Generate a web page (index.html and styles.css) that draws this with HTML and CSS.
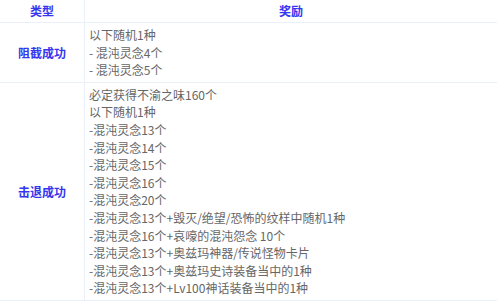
FILE: index.html
```html
<!DOCTYPE html>
<html lang="zh">
<head>
<meta charset="utf-8">
<link rel="stylesheet" href="styles.css">
</head>
<body>
<table class="reward-table">
  <thead>
    <tr>
      <th class="col-type">类型</th>
      <th class="col-reward">奖励</th>
    </tr>
  </thead>
  <tbody>
    <tr>
      <td class="label">阻截成功</td>
      <td class="items">以下随机1种<br>- 混沌灵念4个<br>- 混沌灵念5个</td>
    </tr>
    <tr>
      <td class="label">击退成功</td>
      <td class="items">必定获得不渝之味160个<br>以下随机1种<br>-混沌灵念13个<br>-混沌灵念14个<br>-混沌灵念15个<br>-混沌灵念16个<br>-混沌灵念20个<br>-混沌灵念13个+毁灭/绝望/恐怖的纹样中随机1种<br>-混沌灵念16个+哀嚎的混沌怨念 10个<br>-混沌灵念13个+奥兹玛神器/传说怪物卡片<br>-混沌灵念13个+奥兹玛史诗装备当中的1种<br>-混沌灵念13个+Lv100神话装备当中的1种</td>
    </tr>
  </tbody>
</table>
</body>
</html>
```

FILE: styles.css
```css
html, body {
  margin: 0;
  padding: 0;
  background: #ffffff;
}

.reward-table {
  width: 497px;
  border-collapse: collapse;
  table-layout: fixed;
  font-family: "Noto Sans CJK SC", "Microsoft YaHei", sans-serif;
  font-size: 12px;
  line-height: 17.6px;
  color: #666666;
}

.reward-table th,
.reward-table td {
  border-bottom: 1px solid #e9f0f8;
  padding: 0;
}

.col-type {
  width: 84px;
  border-right: 1px solid #e9f0f8;
}

.reward-table th {
  height: 22px;
  font-weight: bold;
  color: #3535f0;
  text-align: center;
  vertical-align: middle;
}

.label {
  border-right: 1px solid #e9f0f8;
  text-align: center;
  vertical-align: middle;
  font-weight: bold;
  color: #3535f0;
}

.items {
  padding: 3px 4px !important;
  text-align: left;
  vertical-align: top;
}
```
